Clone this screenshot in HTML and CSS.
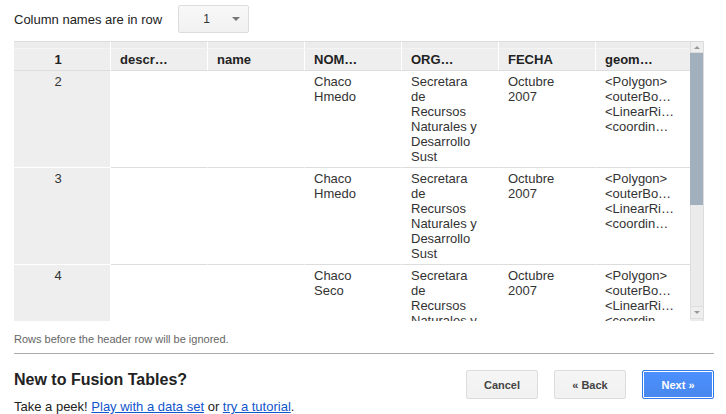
FILE: index.html
```html
<!DOCTYPE html>
<html>
<head>
<meta charset="utf-8">
<link rel="stylesheet" href="styles.css">
</head>
<body>
<div class="page">
  <div class="topbar">
    <span class="label">Column names are in row</span>
    <div class="select"><span class="select-val">1</span><span class="caret"></span></div>
  </div>

  <div class="grid">
    <div class="grid-main">
      <table class="data">
        <colgroup>
          <col class="c"><col class="c"><col class="c"><col class="c"><col class="c"><col class="c"><col class="c-last">
        </colgroup>
        <thead>
          <tr class="strip"><td></td><td></td><td></td><td></td><td></td><td></td><td></td></tr>
          <tr class="head">
            <th class="num">1</th><th>descr…</th><th>name</th><th>NOM…</th><th>ORG…</th><th>FECHA</th><th>geom…</th>
          </tr>
        </thead>
        <tbody>
          <tr>
            <td class="num">2</td><td></td><td></td>
            <td>Chaco Hmedo</td>
            <td>Secretara de Recursos Naturales y Desarrollo Sust</td>
            <td>Octubre 2007</td>
            <td><span class="ln">&lt;Polygon&gt;</span><span class="ln">&lt;outerBo…</span><span class="ln">&lt;LinearRi…</span><span class="ln">&lt;coordin…</span></td>
          </tr>
          <tr>
            <td class="num">3</td><td></td><td></td>
            <td>Chaco Hmedo</td>
            <td>Secretara de Recursos Naturales y Desarrollo Sust</td>
            <td>Octubre 2007</td>
            <td><span class="ln">&lt;Polygon&gt;</span><span class="ln">&lt;outerBo…</span><span class="ln">&lt;LinearRi…</span><span class="ln">&lt;coordin…</span></td>
          </tr>
          <tr>
            <td class="num">4</td><td></td><td></td>
            <td>Chaco Seco</td>
            <td>Secretara de Recursos Naturales y Desarrollo Sust</td>
            <td>Octubre 2007</td>
            <td><span class="ln">&lt;Polygon&gt;</span><span class="ln">&lt;outerBo…</span><span class="ln">&lt;LinearRi…</span><span class="ln">&lt;coordin…</span></td>
          </tr>
        </tbody>
      </table>
    </div>
    <div class="scrollbar">
      <div class="sb-btn sb-up"><span class="tri-up"></span></div>
      <div class="sb-thumb"></div>
      <div class="sb-track"></div>
      <div class="sb-btn sb-down"><span class="tri-down"></span></div>
    </div>
  </div>

  <p class="note">Rows before the header row will be ignored.</p>
  <hr class="rule">

  <div class="bottom">
    <div class="intro">
      <h2 class="title">New to Fusion Tables?</h2>
      <p class="peek">Take a peek! <a href="#">Play with a data set</a> or <a href="#">try a tutorial</a>.</p>
    </div>
    <div class="buttons">
      <button class="btn">Cancel</button>
      <button class="btn">« Back</button>
      <button class="btn btn-primary">Next »</button>
    </div>
  </div>
</div>
</body>
</html>
```
FILE: styles.css
```css
* { box-sizing: border-box; }
html, body { margin: 0; padding: 0; background: #fff; }
body {
  font-family: "Liberation Sans", Arial, sans-serif;
  font-size: 13px;
  color: #222;
}
.page { padding: 0 12px 0 14px; }

.topbar {
  display: flex;
  align-items: center;
  height: 38px;
  margin-bottom: 3px;
}
.label { color: #222; }
.select {
  margin-left: 16px;
  width: 71px;
  height: 28px;
  border: 1px solid #dcdcdc;
  border-radius: 2px;
  background: linear-gradient(#f8f8f8, #f1f1f1);
  display: flex;
  align-items: center;
  padding: 0 8px 0 24px;
  color: #333;
  font-size: 12px;
}
.select-val { flex: 1; }
.caret {
  width: 0; height: 0;
  border-left: 4px solid transparent;
  border-right: 4px solid transparent;
  border-top: 4px solid #777;
}

.grid {
  display: flex;
  width: 690px;
  height: 280px;
}
.grid-main {
  width: 676px;
  overflow: hidden;
}
.data {
  width: 676px;
  table-layout: fixed;
  border-collapse: separate;
  border-spacing: 0;
}
.data col.c { width: 97px; }
.data col.c-last { width: 94px; }
.data td, .data th {
  border-right: 1px solid #fff;
  border-bottom: 1px solid #ddd;
  padding: 3px 17px 3px 9px;
  vertical-align: top;
  text-align: left;
  line-height: 15px;
  color: #333;
}
.data td:last-child, .data th:last-child { border-right: 0; padding-right: 8px; }
.strip td {
  height: 8px;
  padding: 0;
  background: #ececec;
  border-top: 1px solid #ddd;
  border-bottom: 1px solid #f4f4f4;
}
.head th {
  height: 22px;
  background: #eee;
  font-weight: bold;
  color: #222;
  padding-top: 3px;
  padding-bottom: 3px;
}
.data tbody td { height: 97px; }
.data .num {
  background: #eee;
  text-align: center;
  border-bottom-color: #fff;
}
.head th.num { border-bottom-color: #ddd; }
.ln {
  display: block;
  white-space: nowrap;
  overflow: hidden;
}

.scrollbar {
  width: 14px;
  height: 280px;
  display: flex;
  flex-direction: column;
  background: #ebebeb;
  border-right: 1px solid #ddd;
}
.sb-btn {
  height: 12px;
  display: flex;
  align-items: center;
  justify-content: center;
  background: #eee;
  border: 1px solid #ddd;
  border-right: 0;
}
.sb-up { border-top: 1px solid #d8d8d8; }
.tri-up, .tri-down {
  width: 0; height: 0;
  border-left: 3px solid transparent;
  border-right: 3px solid transparent;
}
.tri-up { border-bottom: 3px solid #999; }
.tri-down { border-top: 3px solid #999; }
.sb-thumb {
  height: 152px;
  background: #a2b0be;
}
.sb-track {
  flex: 1;
  background: #ebebeb;
  border-left: 1px solid #ddd;
}
.sb-down { margin-bottom: 2px; height: 13px; }

.note {
  margin: 11px 0 0;
  font-size: 11px;
  line-height: 14px;
  color: #666;
}
.rule {
  margin: 7px 0 0;
  border: 0;
  border-top: 1px solid #aaa;
  height: 0;
}

.bottom {
  display: flex;
  justify-content: space-between;
  align-items: flex-start;
  margin-top: 16px;
}
.title {
  margin: 0;
  font-size: 16px;
  line-height: 20px;
  font-weight: bold;
  color: #222;
}
.peek {
  margin: 9px 0 0;
  line-height: 15px;
  color: #222;
}
.peek a { color: #15c; }

.buttons {
  display: flex;
  gap: 16px;
}
.btn {
  width: 72px;
  height: 29px;
  border: 1px solid #dcdcdc;
  border-radius: 2px;
  background: linear-gradient(#f5f5f5, #f1f1f1);
  font-family: "Liberation Sans", Arial, sans-serif;
  font-size: 11px;
  font-weight: bold;
  color: #444;
  padding: 0;
}
.btn-primary {
  background: linear-gradient(#4d90fe, #4787ed);
  border-color: #3079ed;
  color: #fff;
  box-shadow: inset 0 0 0 1px #fff;
}
```
